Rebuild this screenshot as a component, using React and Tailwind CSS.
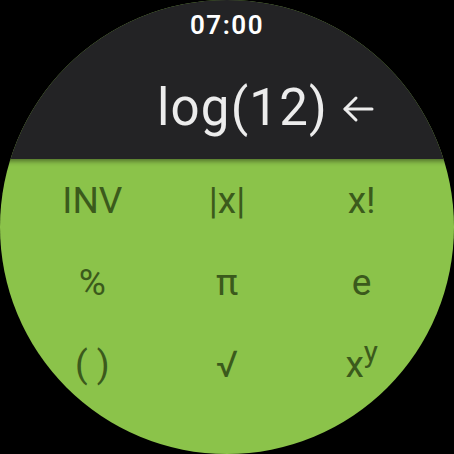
import React from "react";

const keys = [
  ["INV", "|x|", "x!"],
  ["%", "π", "e"],
  ["( )", "√", "xy"],
];

export default function App() {
  return (
    <div className="w-[454px] h-[454px] bg-black" style={{ fontFamily: "Roboto, 'Noto Sans', sans-serif" }}>
      <div className="w-[454px] h-[454px] rounded-full overflow-hidden flex flex-col bg-[#8bc34a]">
        <div className="relative z-10 h-[159px] bg-[#232325] shadow-[0_2px_5px_rgba(0,0,0,0.45)] flex flex-col">
          <div className="pt-[9px] text-center text-white text-[26px] leading-[32px] font-semibold tracking-[1.5px]">07:00</div>
          <div className="flex items-center justify-end pr-[79px] mt-[37px]">
            <span className="text-[#ececec] text-[51px] leading-[60px] font-normal tracking-[1.2px]">log(12)</span>
            <svg width="34" height="30" viewBox="0 0 34 30" className="ml-[13px] mt-[2px]" fill="none" stroke="#ececec" strokeWidth="3" strokeLinecap="round" strokeLinejoin="round">
              <path d="M31 15H4" />
              <path d="M15 4L4 15L15 26" />
            </svg>
          </div>
        </div>
        <div className="grid grid-cols-3 px-[25px] text-[#3b5a1c] text-[37px] font-normal">
          {keys.map((row, ri) =>
            row.map((k, ci) => (
              <div key={ri + "-" + ci} className="h-[82px] flex items-center justify-center leading-none">
                {k === "xy" ? (
                  <span>
                    x<span className="relative -top-[15px] text-[30px]">y</span>
                  </span>
                ) : (
                  <span>{k}</span>
                )}
              </div>
            ))
          )}
        </div>
      </div>
    </div>
  );
}
